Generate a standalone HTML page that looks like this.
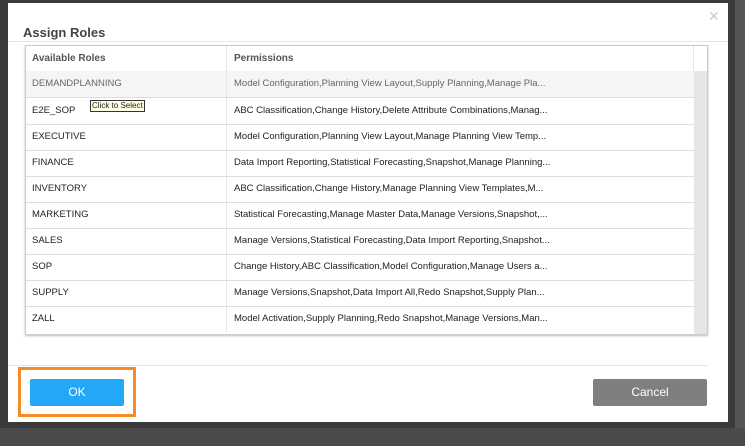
<!DOCTYPE html><html><head><style>
body{margin:0;width:745px;height:446px;background:#3a3a3a;position:relative;overflow:hidden;font-family:"Liberation Sans",sans-serif}
.m{position:absolute;left:8px;top:3px;width:720px;height:419px;background:#fff}
.t{position:absolute;left:15px;top:22px;font-size:13px;font-weight:bold;color:#444}
.x{position:absolute;left:700px;top:5px;font-size:14px;color:#ccc}
.hl{position:absolute;left:0;top:38px;width:720px;height:1px;background:#e5e5e5}
.tb{position:absolute;left:17px;top:42px;width:681px;height:288px;border:1px solid #ccc;box-shadow:0 1px 2px #bbb}
.sb{position:absolute;right:0;top:25px;width:13px;height:263px;background:#e6e6e6}
.sbh{position:absolute;right:0;top:0;width:13px;height:25px;border-left:1px solid #e6e6e6}
.r{position:absolute;left:0;width:668px;height:26px;border-bottom:1px solid #ddd;font-size:9.5px;color:#222;line-height:26px}
.r span{position:absolute;left:6px}.r b{font-weight:normal;position:absolute;left:208px}
.r i{position:absolute;left:200px;top:0;bottom:0;border-left:1px solid #e6e6e6}
.h{font-weight:bold;color:#555;font-size:10px;height:25px;line-height:25px;border-bottom:1px solid #ddd}
.fl{position:absolute;left:0;top:362px;width:700px;height:1px;background:#e5e5e5}
.ok{position:absolute;left:22px;top:376px;width:94px;height:27px;background:#22a8f6;color:#fff;font-size:12px;text-align:center;line-height:27px;border-radius:2px}
.or{position:absolute;left:10px;top:364px;width:112px;height:44px;border:3px solid #f68b2a}
.cn{position:absolute;left:585px;top:376px;width:114px;height:27px;background:#7f7f7f;color:#fff;font-size:12px;text-align:center;line-height:27px;border-radius:2px}
.tip{position:absolute;left:64px;top:2px;font-size:8px;line-height:10px;border:1px solid #333;background:#ffffe6;padding:0 1px}
</style></head><body>
<div style="position:absolute;left:735px;top:0;width:10px;height:446px;background:#555"></div>
<div style="position:absolute;left:0;top:428px;width:745px;height:18px;background:#4a4a4a"></div>
<div class="m">
<div class="t">Assign Roles</div><div class="x">✕</div><div class="hl"></div>
<div class="tb">
<div class="sbh"></div><div class="sb"></div>
<div class="r h" style="top:0"><span>Available Roles</span><i></i><b style="font-weight:bold">Permissions</b></div>
<div class="r" style="top:25px;background:#f5f5f5;color:#666"><span>DEMANDPLANNING</span><i></i><b>Model Configuration,Planning View Layout,Supply Planning,Manage Pla...</b></div>
<div class="r" style="top:52px"><span>E2E_SOP</span><div class="tip">Click to Select</div><i></i><b>ABC Classification,Change History,Delete Attribute Combinations,Manag...</b></div>
<div class="r" style="top:78px"><span>EXECUTIVE</span><i></i><b>Model Configuration,Planning View Layout,Manage Planning View Temp...</b></div>
<div class="r" style="top:104px"><span>FINANCE</span><i></i><b>Data Import Reporting,Statistical Forecasting,Snapshot,Manage Planning...</b></div>
<div class="r" style="top:130px"><span>INVENTORY</span><i></i><b>ABC Classification,Change History,Manage Planning View Templates,M...</b></div>
<div class="r" style="top:156px"><span>MARKETING</span><i></i><b>Statistical Forecasting,Manage Master Data,Manage Versions,Snapshot,...</b></div>
<div class="r" style="top:182px"><span>SALES</span><i></i><b>Manage Versions,Statistical Forecasting,Data Import Reporting,Snapshot...</b></div>
<div class="r" style="top:208px"><span>SOP</span><i></i><b>Change History,ABC Classification,Model Configuration,Manage Users a...</b></div>
<div class="r" style="top:234px"><span>SUPPLY</span><i></i><b>Manage Versions,Snapshot,Data Import All,Redo Snapshot,Supply Plan...</b></div>
<div class="r" style="top:260px;border-bottom:none"><span>ZALL</span><i></i><b>Model Activation,Supply Planning,Redo Snapshot,Manage Versions,Man...</b></div>
</div>
<div class="fl"></div>
<div class="or"></div><div class="ok">OK</div><div class="cn">Cancel</div>
</div>
</body></html>
